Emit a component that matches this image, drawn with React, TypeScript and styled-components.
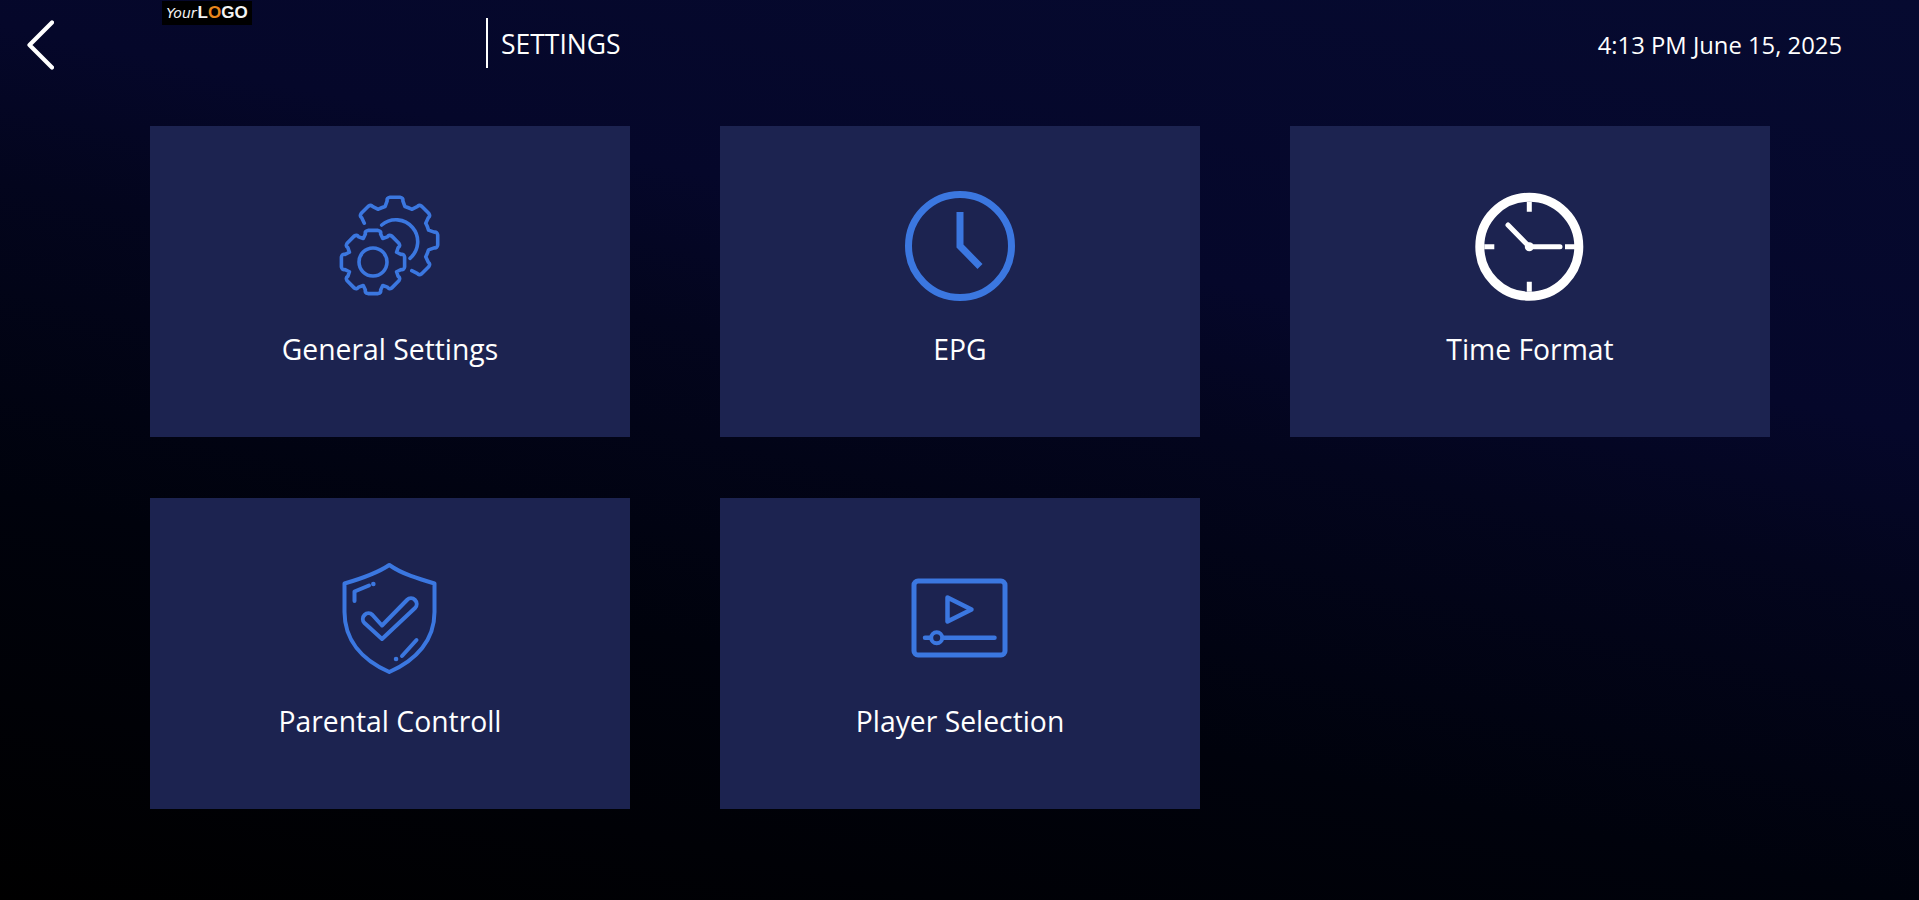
import React from "react";
import styled, { createGlobalStyle } from "styled-components";

const BLUE = "#3b77e0";

const GlobalStyle = createGlobalStyle`
  html, body {
    margin: 0;
    padding: 0;
    background: #000;
  }
  body {
    font-family: "Open Sans", "Noto Sans", sans-serif;
    color: #fff;
  }
`;

// teeth are listed by centre angle, so a gear can stay open where another one covers it
function gearPath(cx: number, cy: number, outer: number, root: number, angles: number[]) {
  const pt = (r: number, deg: number) => {
    const a = (deg * Math.PI) / 180;
    return `${(cx + r * Math.cos(a)).toFixed(2)} ${(cy + r * Math.sin(a)).toFixed(2)}`;
  };
  const spread = (px: number, r: number) => ((px / r) * 180) / Math.PI;
  const rootHalf = spread(10, root);
  const cornerHalf = spread(8.5, outer);
  const flatHalf = spread(5, outer);
  return angles
    .map((deg, i) => {
      const head = i === 0 ? `M${pt(root, deg - rootHalf)}` : `A${root} ${root} 0 0 1 ${pt(root, deg - rootHalf)}`;
      return [
        head,
        `L${pt(outer - 3, deg - cornerHalf)}`,
        `Q${pt(outer, deg - cornerHalf)} ${pt(outer, deg - flatHalf)}`,
        `L${pt(outer, deg + flatHalf)}`,
        `Q${pt(outer, deg + cornerHalf)} ${pt(outer - 3, deg + cornerHalf)}`,
        `L${pt(root, deg + rootHalf)}`,
      ].join(" ");
    })
    .join(" ");
}

const GearsIcon = () => (
  <IconSvg viewBox="0 0 160 150" fill="none" stroke={BLUE} strokeWidth="3.6" strokeLinecap="round" strokeLinejoin="round">
    <path d={gearPath(85, 70, 43, 35, [-135, -90, -45, 0, 45])} />
    <path d="M71.7 55 A21 21 0 1 1 100 88.3" />
    <path d={gearPath(63, 92, 32, 25.5, [0, 45, 90, 135, 180, 225, 270, 315]) + " Z"} />
    <circle cx="63" cy="92" r="14" />
  </IconSvg>
);

const EpgClockIcon = () => (
  <IconSvg viewBox="-5 0 160 150" fill="none" stroke={BLUE} strokeWidth="7">
    <circle cx="75" cy="76" r="51.5" />
    <path d="M75 42 V76 L95 96.5" />
  </IconSvg>
);

const FormatClockIcon = () => (
  <IconSvg viewBox="0 0 160 150" fill="none" stroke="#fff" strokeLinecap="round">
    <circle cx="79.3" cy="76.7" r="49.5" strokeWidth="9" />
    <path d="M79.3 31.7 V41.7 M79.3 111.7 V121.7 M34.3 76.7 H44.3 M115 76.7 H125" strokeWidth="5" strokeLinecap="butt" />
    <path d="M58 55 L79.3 76.7 H110" strokeWidth="5" />
    <circle cx="79.3" cy="76.7" r="4.5" fill="#fff" stroke="none" />
  </IconSvg>
);

const ShieldIcon = () => (
  <IconSvg viewBox="0 -8 160 150" fill="none" stroke={BLUE} strokeWidth="4" strokeLinecap="round" strokeLinejoin="round">
    <path d="M79.3 15 C66 24 50 29 34.5 33.5 V62 C34.5 90 52 110 79.3 122 C106.6 110 124.5 90 124.5 62 V33.5 C109 29 92 24 79.3 15 Z" />
    <path d="M44.5 51 V41.5 L59 35.5" />
    <path d="M63.3 34 h0.1" strokeWidth="4.5" />
    <path d="M92 106 L106.5 90" />
    <path d="M86 109 h0.1" strokeWidth="4.5" />
    <path d="M54.5 73 L72 89 L105 58 A5.5 5.5 0 0 0 97 50 L72 75.5 L62.5 65 A5.5 5.5 0 0 0 54.5 73 Z" />
  </IconSvg>
);

const PlayerIcon = () => (
  <IconSvg viewBox="-5 -18 160 150" fill="none" stroke={BLUE} strokeWidth="5" strokeLinecap="round" strokeLinejoin="round">
    <rect x="29" y="21" width="91" height="74" rx="4" />
    <path d="M62.5 37.5 L86.5 49.5 L62.5 61.5 Z" strokeWidth="4.5" />
    <path d="M40 77.7 H45 M58 77.7 H109.5" strokeWidth="4.5" />
    <circle cx="51.7" cy="77.7" r="5.5" strokeWidth="4" />
  </IconSvg>
);

const CARDS = [
  { label: "General Settings", Icon: GearsIcon },
  { label: "EPG", Icon: EpgClockIcon },
  { label: "Time Format", Icon: FormatClockIcon },
  { label: "Parental Controll", Icon: ShieldIcon },
  { label: "Player Selection", Icon: PlayerIcon },
];

const App: React.FC = () => {
  return (
    <Page>
      <GlobalStyle />
      <Header>
        <BackButton aria-label="Back">
          <svg width="27" height="50" viewBox="0 0 27 50" fill="none" stroke="#fff" strokeWidth="4.2" strokeLinecap="round" strokeLinejoin="round">
            <path d="M25 2.5 L2.5 25 L25 47.5" />
          </svg>
        </BackButton>
        <Logo>
          <LogoYour>Your</LogoYour>L<LogoRing>O</LogoRing>GO
        </Logo>
        <Title>SETTINGS</Title>
        <Clock>4:13 PM June 15, 2025</Clock>
      </Header>
      <Grid>
        {CARDS.map(({ label, Icon }) => (
          <Card key={label}>
            <Icon />
            <CardLabel>{label}</CardLabel>
          </Card>
        ))}
      </Grid>
    </Page>
  );
};

const Page = styled.div`
  width: 1919px;
  height: 900px;
  overflow: hidden;
  background: linear-gradient(12deg, #000 0%, #00020c 31%, #03051d 55%, #05072a 67%, #060a30 100%);
`;

const Header = styled.header`
  display: flex;
  align-items: flex-start;
  height: 126px;
  padding-left: 27px;
`;

const BackButton = styled.button`
  width: 27px;
  height: 50px;
  margin-top: 20px;
  padding: 0;
  border: 0;
  background: none;
  flex: none;
`;

const Logo = styled.div`
  flex: none;
  width: 90px;
  height: 24px;
  margin: 1px 0 0 108px;
  background: #000;
  display: flex;
  align-items: center;
  justify-content: center;
  font-family: "Liberation Sans", sans-serif;
  font-size: 17px;
  font-weight: 700;
  color: #f4f4f4;
`;

const LogoYour = styled.span`
  font-family: "DejaVu Sans", sans-serif;
  font-size: 14px;
  font-style: italic;
  font-weight: 400;
  margin-right: 1px;
`;

const LogoRing = styled.span`
  color: #e8861c;
`;

const Title = styled.h1`
  flex: none;
  margin: 18px 0 0 234px;
  height: 50px;
  padding-left: 13px;
  border-left: 2px solid #fff;
  font-size: 26.5px;
  font-weight: 400;
  line-height: 52px;
`;

const Clock = styled.div`
  margin: 28px 77px 0 auto;
  font-size: 23.8px;
  line-height: 34px;
`;

const Grid = styled.main`
  display: grid;
  grid-template-columns: repeat(3, 480px);
  grid-auto-rows: 311px;
  column-gap: 90px;
  row-gap: 61px;
  padding-left: 150px;
`;

const Card = styled.div`
  background: #1c2350;
  display: flex;
  flex-direction: column;
  align-items: center;
  padding-top: 44px;
  box-sizing: border-box;
`;

const IconSvg = styled.svg`
  width: 160px;
  height: 150px;
  flex: none;
`;

const CardLabel = styled.div`
  margin-top: 10px;
  font-size: 28.3px;
  line-height: 38px;
  color: #fff;
`;

export default App;
